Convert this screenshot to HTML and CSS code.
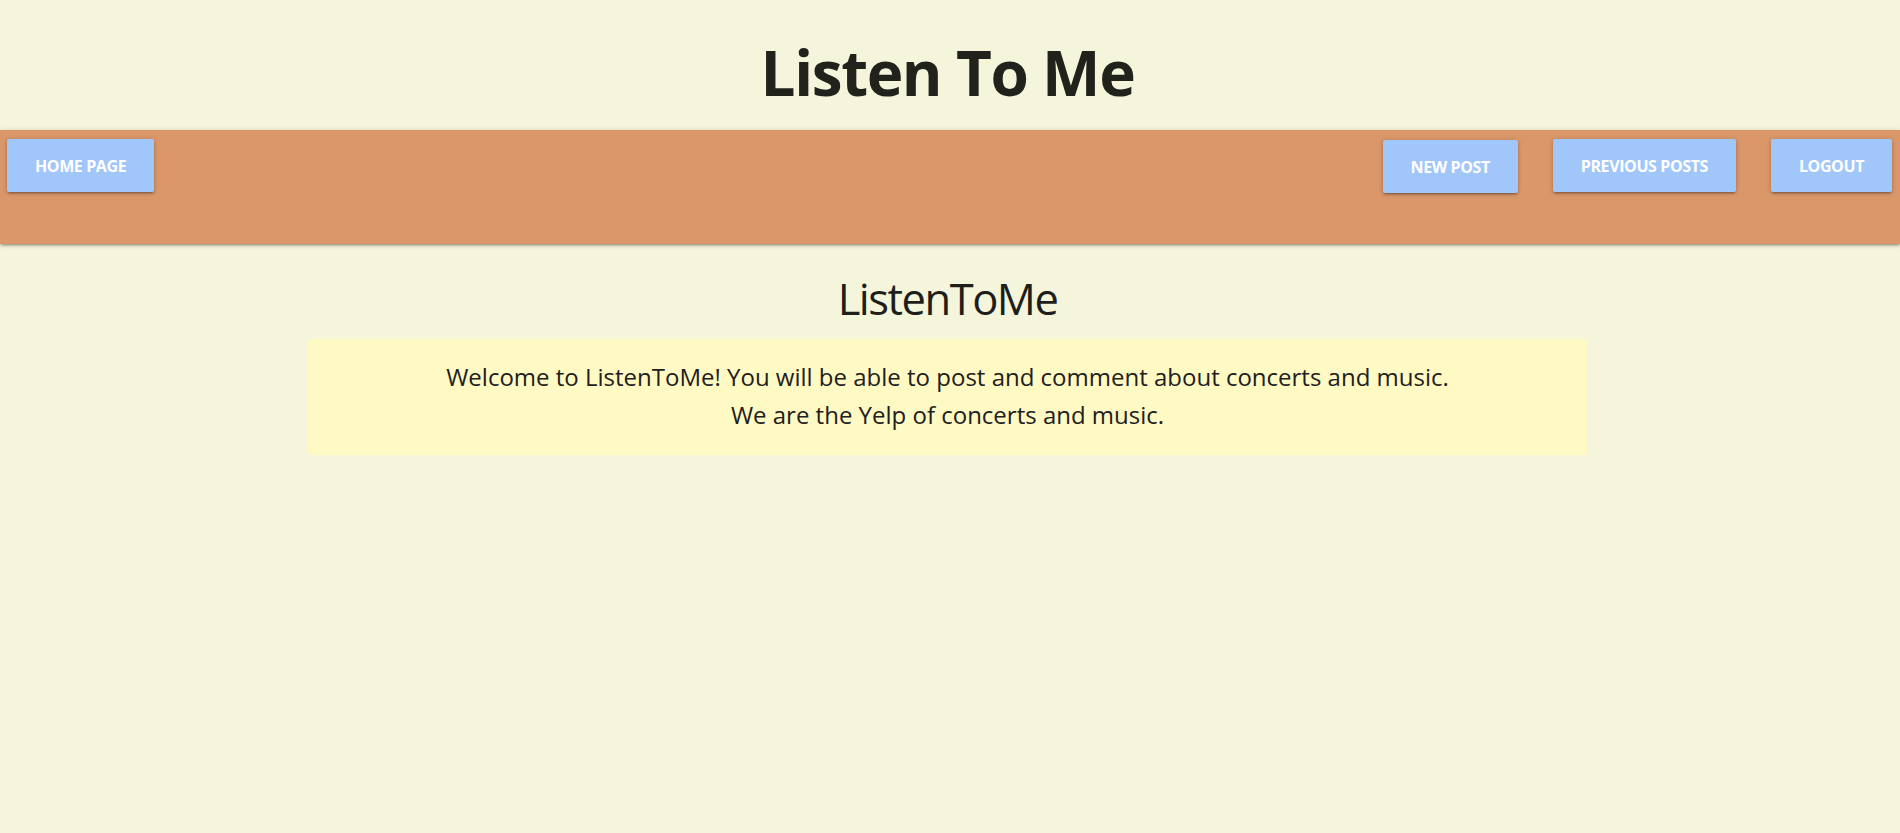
FILE: index.html
```html
<!DOCTYPE html>
<html lang="en">
<head>
<meta charset="utf-8">
<title>Listen To Me</title>
<link rel="stylesheet" href="styles.css">
</head>
<body>
<header class="site-header">
  <h1 class="site-title">Listen To Me</h1>
</header>
<nav class="navbar">
  <div class="nav-left">
    <a class="btn" href="#">Home Page</a>
  </div>
  <div class="nav-right">
    <a class="btn btn-low" href="#">New Post</a>
    <a class="btn" href="#">Previous Posts</a>
    <a class="btn" href="#">Logout</a>
  </div>
</nav>
<main class="main">
  <h3 class="page-heading">ListenToMe</h3>
  <div class="welcome">
    <p class="welcome-line">Welcome to ListenToMe! You will be able to post and comment about concerts and music.</p>
    <p class="welcome-line">We are the Yelp of concerts and music.</p>
  </div>
</main>
</body>
</html>
```
FILE: styles.css
```css
* { box-sizing: border-box; }
html, body {
  margin: 0;
  padding: 0;
  background: #f5f5dc;
  height: 100%;
}
body {
  font-family: "Open Sans", "Noto Sans", sans-serif;
  color: #212121;
}
.site-header {
  height: 130px;
  padding: 38px 5px 0 0;
}
.site-title {
  margin: 0;
  text-align: center;
  font-size: 62px;
  line-height: 68px;
  font-weight: 700;
  color: #22221c;
  letter-spacing: -1.4px;
}
.navbar {
  height: 114px;
  background: #da976a;
  display: flex;
  justify-content: space-between;
  align-items: flex-start;
  padding: 9px 8px 0 7px;
  box-shadow: 0 2px 2px 0 rgba(0,0,0,.14), 0 3px 1px -2px rgba(0,0,0,.12), 0 1px 5px 0 rgba(0,0,0,.2);
  position: relative;
}
.nav-right {
  display: flex;
  gap: 35px;
  align-items: flex-start;
}
.btn {
  display: inline-flex;
  align-items: center;
  justify-content: center;
  height: 53px;
  padding: 0 28px;
  background: #a1c6fa;
  color: #fff;
  text-decoration: none;
  text-transform: uppercase;
  font-weight: 700;
  font-size: 16px;
  letter-spacing: -0.4px;
  border-radius: 2px;
  box-shadow: 0 2px 2px 0 rgba(0,0,0,.14), 0 3px 1px -2px rgba(0,0,0,.12), 0 1px 5px 0 rgba(0,0,0,.2);
}
.btn-low { margin-top: 1px; }
.main {
  padding-right: 5px;
}
.page-heading {
  margin: 30px 0 16px;
  text-align: center;
  font-weight: 400;
  font-size: 43.5px;
  line-height: 49px;
  letter-spacing: -1.5px;
  color: #1e1e1a;
}
.welcome {
  width: 1279px;
  margin: 0 auto;
  background: #fff9c4;
  border-radius: 4px;
  padding: 19px 0 20px;
  text-align: center;
}
.welcome-line {
  margin: 0;
  font-size: 24px;
  line-height: 38.3px;
  color: #22201c;
}
```
